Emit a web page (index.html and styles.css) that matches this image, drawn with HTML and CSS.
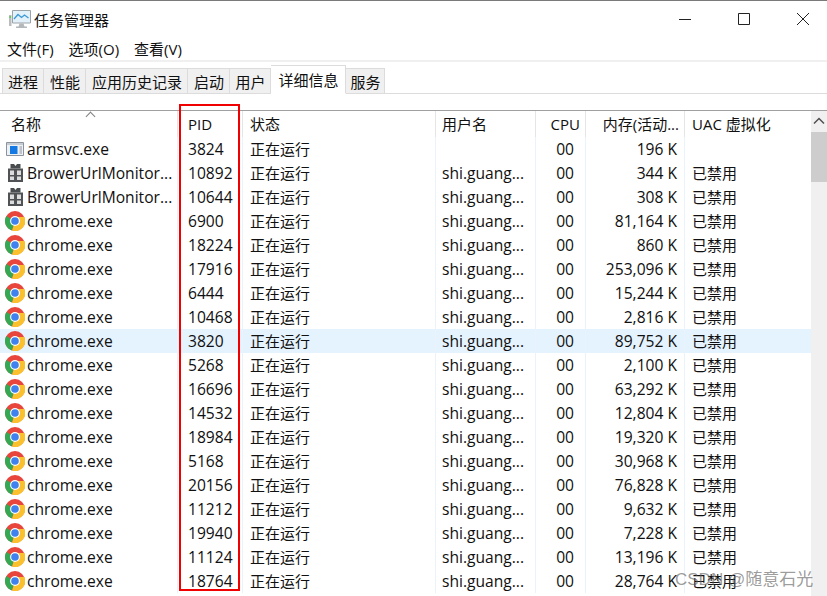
FILE: index.html
```html
<!DOCTYPE html>
<html lang="zh">
<head>
<meta charset="utf-8">
<title>任务管理器</title>
<link rel="stylesheet" href="styles.css">
</head>
<body>
<svg class="defs" width="0" height="0" aria-hidden="true">
  <symbol id="chrome" viewBox="0 0 20 20">
    <circle cx="10" cy="10" r="10" fill="#e8453c"/>
    <path d="M10 10 L1.300 5 A10 10 0 0 0 7 19.500 Z" fill="#34a853"/>
    <path d="M10 6 H19.400 A10 10 0 0 1 7 19.500 L10 10 Z" fill="#fbc02d"/>
    <circle cx="10" cy="10" r="4.900" fill="#fff"/>
    <circle cx="10" cy="10" r="3.800" fill="#3f81ee"/>
  </symbol>
  <symbol id="gift" viewBox="0 0 15 18">
    <path d="M2.500 0h3.500l1.500 2 1.500-2h3.500v4.500h-10z" fill="#4a4d4f"/>
    <path d="M0 4.500h15V18H0z" fill="#505355"/>
    <path d="M2 6.500h4v4.500H2zM9 6.500h4v4.500H9zM2 12.500h4V16H2zM9 12.500h4V16H9z" fill="#dcdcdc"/>
  </symbol>
  <symbol id="app" viewBox="0 0 18 14">
    <path d="M.5.500h17v13H.5z" fill="#eef1f4" stroke="#8b949e"/>
    <path d="M1 1h16v2H1z" fill="#c5ccd4"/>
    <path d="M4 4h7.500v8H4z" fill="#1479e2"/>
    <path d="M13.500 5h2.500M13.500 7h2.500M13.500 9h2.500M13.500 11h2.500" stroke="#8f969e"/>
  </symbol>
</svg>

<header class="titlebar">
  <div class="title">
    <svg class="app-icon" width="22" height="20" viewBox="0 0 22 20">
      <path d="M0 6h2.500v11H0z" fill="#b9bdbf"/>
      <path d="M.5 7h1.500v2H.5z" fill="#5fd14a"/>
      <path d="M3.500 1.500h18V14h-18z" fill="#e3f1fb" stroke="#9aa3a8"/>
      <path d="M5 10l4-4.500 3.500 3 3-2.500 4 3" fill="none" stroke="#3c9ad6" stroke-width="1.300"/>
      <path d="M10.500 14.500h4l1 3h2.500v1.500H7v-1.500h2.500z" fill="#b4b8ba"/>
    </svg>
    <span>任务管理器</span>
  </div>
  <div class="win-buttons">
    <svg width="14" height="14" viewBox="0 0 14 14"><path d="M1 7.500h12" stroke="#222" fill="none"/></svg>
    <svg width="14" height="14" viewBox="0 0 14 14"><path d="M1.500 1.500h11v11h-11z" stroke="#222" fill="none"/></svg>
    <svg width="14" height="14" viewBox="0 0 14 14"><path d="M1 1l12 12M13 1L1 13" stroke="#222" fill="none"/></svg>
  </div>
</header>

<nav class="menubar">
  <span>文件(F)</span><span>选项(O)</span><span>查看(V)</span>
</nav>

<div class="tabs">
  <span class="tab tab-1">进程</span>
  <span class="tab tab-2">性能</span>
  <span class="tab tab-3">应用历史记录</span>
  <span class="tab tab-4">启动</span>
  <span class="tab tab-5">用户</span>
  <span class="tab tab-active">详细信息</span>
  <span class="tab tab-7">服务</span>
</div>

<main class="panel">
  <div class="list">
    <div class="row head">
      <span class="c-name sorted">名称</span>
      <span class="c-pid">PID</span>
      <span class="c-status">状态</span>
      <span class="c-user">用户名</span>
      <span class="c-cpu">CPU</span>
      <span class="c-mem">内存(活动...</span>
      <span class="c-uac">UAC 虚拟化</span>
    </div>
    <div class="row"><span class="c-name"><svg class="ico-app"><use href="#app"/></svg>armsvc.exe</span><span class="c-pid">3824</span><span class="c-status">正在运行</span><span class="c-user"></span><span class="c-cpu">00</span><span class="c-mem">196 K</span><span class="c-uac"></span></div>
    <div class="row"><span class="c-name"><svg class="ico-gift"><use href="#gift"/></svg>BrowerUrlMonitor...</span><span class="c-pid">10892</span><span class="c-status">正在运行</span><span class="c-user">shi.guang...</span><span class="c-cpu">00</span><span class="c-mem">344 K</span><span class="c-uac">已禁用</span></div>
    <div class="row"><span class="c-name"><svg class="ico-gift"><use href="#gift"/></svg>BrowerUrlMonitor...</span><span class="c-pid">10644</span><span class="c-status">正在运行</span><span class="c-user">shi.guang...</span><span class="c-cpu">00</span><span class="c-mem">308 K</span><span class="c-uac">已禁用</span></div>
    <div class="row"><span class="c-name"><svg class="ico-chrome"><use href="#chrome"/></svg>chrome.exe</span><span class="c-pid">6900</span><span class="c-status">正在运行</span><span class="c-user">shi.guang...</span><span class="c-cpu">00</span><span class="c-mem">81,164 K</span><span class="c-uac">已禁用</span></div>
    <div class="row"><span class="c-name"><svg class="ico-chrome"><use href="#chrome"/></svg>chrome.exe</span><span class="c-pid">18224</span><span class="c-status">正在运行</span><span class="c-user">shi.guang...</span><span class="c-cpu">00</span><span class="c-mem">860 K</span><span class="c-uac">已禁用</span></div>
    <div class="row"><span class="c-name"><svg class="ico-chrome"><use href="#chrome"/></svg>chrome.exe</span><span class="c-pid">17916</span><span class="c-status">正在运行</span><span class="c-user">shi.guang...</span><span class="c-cpu">00</span><span class="c-mem">253,096 K</span><span class="c-uac">已禁用</span></div>
    <div class="row"><span class="c-name"><svg class="ico-chrome"><use href="#chrome"/></svg>chrome.exe</span><span class="c-pid">6444</span><span class="c-status">正在运行</span><span class="c-user">shi.guang...</span><span class="c-cpu">00</span><span class="c-mem">15,244 K</span><span class="c-uac">已禁用</span></div>
    <div class="row"><span class="c-name"><svg class="ico-chrome"><use href="#chrome"/></svg>chrome.exe</span><span class="c-pid">10468</span><span class="c-status">正在运行</span><span class="c-user">shi.guang...</span><span class="c-cpu">00</span><span class="c-mem">2,816 K</span><span class="c-uac">已禁用</span></div>
    <div class="row selected"><span class="c-name"><svg class="ico-chrome"><use href="#chrome"/></svg>chrome.exe</span><span class="c-pid">3820</span><span class="c-status">正在运行</span><span class="c-user">shi.guang...</span><span class="c-cpu">00</span><span class="c-mem">89,752 K</span><span class="c-uac">已禁用</span></div>
    <div class="row"><span class="c-name"><svg class="ico-chrome"><use href="#chrome"/></svg>chrome.exe</span><span class="c-pid">5268</span><span class="c-status">正在运行</span><span class="c-user">shi.guang...</span><span class="c-cpu">00</span><span class="c-mem">2,100 K</span><span class="c-uac">已禁用</span></div>
    <div class="row"><span class="c-name"><svg class="ico-chrome"><use href="#chrome"/></svg>chrome.exe</span><span class="c-pid">16696</span><span class="c-status">正在运行</span><span class="c-user">shi.guang...</span><span class="c-cpu">00</span><span class="c-mem">63,292 K</span><span class="c-uac">已禁用</span></div>
    <div class="row"><span class="c-name"><svg class="ico-chrome"><use href="#chrome"/></svg>chrome.exe</span><span class="c-pid">14532</span><span class="c-status">正在运行</span><span class="c-user">shi.guang...</span><span class="c-cpu">00</span><span class="c-mem">12,804 K</span><span class="c-uac">已禁用</span></div>
    <div class="row"><span class="c-name"><svg class="ico-chrome"><use href="#chrome"/></svg>chrome.exe</span><span class="c-pid">18984</span><span class="c-status">正在运行</span><span class="c-user">shi.guang...</span><span class="c-cpu">00</span><span class="c-mem">19,320 K</span><span class="c-uac">已禁用</span></div>
    <div class="row"><span class="c-name"><svg class="ico-chrome"><use href="#chrome"/></svg>chrome.exe</span><span class="c-pid">5168</span><span class="c-status">正在运行</span><span class="c-user">shi.guang...</span><span class="c-cpu">00</span><span class="c-mem">30,968 K</span><span class="c-uac">已禁用</span></div>
    <div class="row"><span class="c-name"><svg class="ico-chrome"><use href="#chrome"/></svg>chrome.exe</span><span class="c-pid">20156</span><span class="c-status">正在运行</span><span class="c-user">shi.guang...</span><span class="c-cpu">00</span><span class="c-mem">76,828 K</span><span class="c-uac">已禁用</span></div>
    <div class="row"><span class="c-name"><svg class="ico-chrome"><use href="#chrome"/></svg>chrome.exe</span><span class="c-pid">11212</span><span class="c-status">正在运行</span><span class="c-user">shi.guang...</span><span class="c-cpu">00</span><span class="c-mem">9,632 K</span><span class="c-uac">已禁用</span></div>
    <div class="row"><span class="c-name"><svg class="ico-chrome"><use href="#chrome"/></svg>chrome.exe</span><span class="c-pid">19940</span><span class="c-status">正在运行</span><span class="c-user">shi.guang...</span><span class="c-cpu">00</span><span class="c-mem">7,228 K</span><span class="c-uac">已禁用</span></div>
    <div class="row"><span class="c-name"><svg class="ico-chrome"><use href="#chrome"/></svg>chrome.exe</span><span class="c-pid">11124</span><span class="c-status">正在运行</span><span class="c-user">shi.guang...</span><span class="c-cpu">00</span><span class="c-mem">13,196 K</span><span class="c-uac">已禁用</span></div>
    <div class="row"><span class="c-name"><svg class="ico-chrome"><use href="#chrome"/></svg>chrome.exe</span><span class="c-pid">18764</span><span class="c-status">正在运行</span><span class="c-user">shi.guang...</span><span class="c-cpu">00</span><span class="c-mem">28,764 K</span><span class="c-uac">已禁用</span></div>
  </div>
  <aside class="scrollbar">
    <svg class="arrow" width="16" height="21" viewBox="0 0 16 21"><path d="M3 12.500l5-5 5 5" fill="none" stroke="#505050" stroke-width="1.500"/></svg>
    <div class="thumb"></div>
  </aside>
</main>

<div class="highlight"></div>
<div class="watermark">CSDN @随意石光</div>
</body>
</html>
```

FILE: styles.css
```css
* { box-sizing: border-box; }
html, body { margin: 0; padding: 0; }
body {
  position: relative;
  width: 827px;
  height: 596px;
  overflow: hidden;
  background: #fff;
  color: #101010;
  font-family: "Open Sans", "Noto Sans CJK SC", sans-serif;
  font-size: 15px;
}
.defs { position: absolute; }
.titlebar {
  height: 37px;
  border-top: 1px solid #7a7a7a;
  display: flex;
  align-items: center;
  justify-content: space-between;
  padding: 0 17px 0 9px;
}
.title { display: flex; align-items: center; gap: 3px; }
.app-icon { display: block; }
.win-buttons { display: flex; gap: 45px; }
.win-buttons svg { display: block; }
.menubar {
  height: 25px;
  display: flex;
  align-items: center;
  gap: 15px;
  padding-left: 7px;
  border-bottom: 2px solid #f0f0f0;
}
.tabs {
  height: 32px;
  display: flex;
  align-items: flex-end;
  padding: 0 0 0 2px;
  border-bottom: 1px solid #dcdcdc;
  position: relative;
}
.tab {
  height: 26px;
  margin-bottom: -1px;
  padding-left: 1px;
  background: #f0f0f0;
  border: 1px solid #dcdcdc;
  border-left-width: 0;
  display: flex;
  align-items: center;
  justify-content: center;
}
.tab-1 { width: 42px; border-left-width: 1px; padding-left: 0; }
.tab-2 { width: 42px; }
.tab-3 { width: 102px; }
.tab-4 { width: 42px; }
.tab-5 { width: 41px; }
.tab-active {
  width: 75px;
  height: 29px;
  background: #fff;
  border-bottom-color: #fff;
}
.tab-7 { width: 39px; }
.panel {
  margin-top: 16px;
  height: 486px;
  display: flex;
  border-top: 1px solid #a0a0a0;
}
.list { width: 811px; flex: none; }
.row {
  display: grid;
  grid-template-columns: 178px 65px 193px 100px 50px 99px 126px;
  height: 24px;
  line-height: 24px;
  white-space: nowrap;
  font-size: 15.6px;
}
.row > span { padding-left: 7px; border-right: 1px solid #eaf2fb; overflow: hidden; }
.row > span:last-child { border-right: 0; }
.row > .c-status, .row > .c-uac { font-size: 15px; }
.head { height: 26px; line-height: 26px; font-size: 15px; }
.head > span { border-right-color: #e5e5e5; }
.selected { background: #e5f3ff; }
.c-name { display: flex; align-items: center; padding-left: 5px !important; position: relative; }
.head .c-name { padding-left: 11px !important; overflow: visible; }
.sorted::after {
  content: "";
  position: absolute;
  left: 87px;
  top: 2px;
  width: 6px;
  height: 6px;
  border-left: 1px solid #808080;
  border-top: 1px solid #808080;
  transform: rotate(45deg);
}
.c-pid { padding-left: 10px !important; }
.c-user { padding-left: 6px !important; }
.c-cpu, .c-mem { text-align: right; padding-right: 7px; }
.c-cpu { padding-right: 11px; }
.head .c-cpu { padding-right: 5px; }
.head .c-mem { padding-right: 5px; }
.ico-chrome { width: 20px; height: 20px; margin-right: 2px; flex: none; }
.ico-gift { width: 15px; height: 18px; margin: 0 4px 0 3px; flex: none; }
.ico-app { width: 18px; height: 14px; margin: 0 3px 0 1px; flex: none; }
.scrollbar { width: 16px; flex: none; background: #f0f0f0; }
.arrow { display: block; }
.thumb { height: 50px; background: #cdcdcd; }
.highlight {
  position: absolute;
  left: 179px;
  top: 104px;
  width: 61px;
  height: 487px;
  border: 2px solid #f00000;
  pointer-events: none;
}
.watermark {
  position: absolute;
  left: 675px;
  top: 565px;
  font-family: "Liberation Sans", "Noto Sans CJK SC", sans-serif;
  font-size: 17px;
  color: rgba(90, 90, 90, 0.62);
  white-space: nowrap;
}
```
